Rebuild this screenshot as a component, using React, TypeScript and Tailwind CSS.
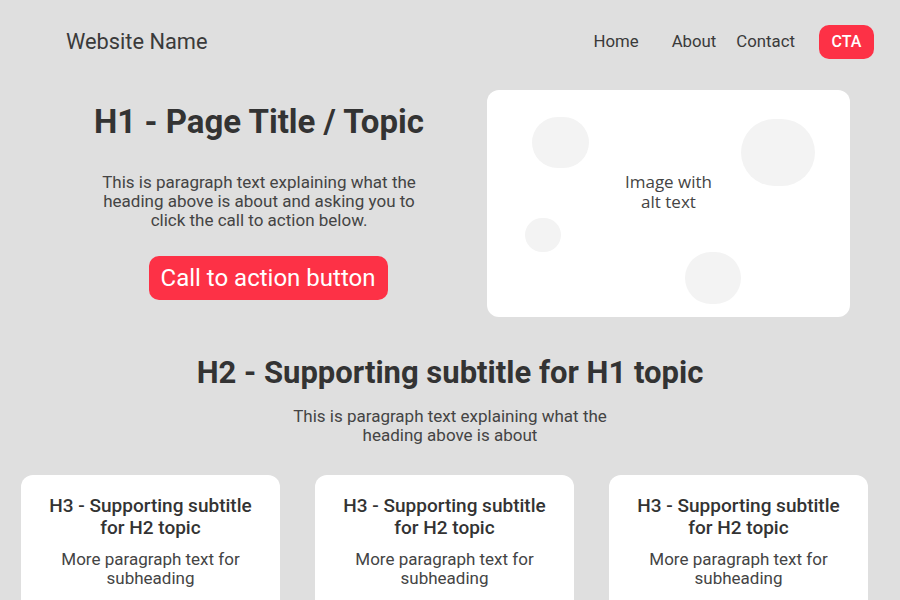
import React from "react";

const cards = [1, 2, 3];

export default function App() {
  return (
    <div className="h-[600px] w-[900px] overflow-hidden bg-[#dfdfdf] text-[#333333] font-['Roboto',sans-serif]">
      <header className="flex h-[84px] items-center justify-between pl-[66px] pr-[26px]">
        <div className="text-[21.8px] text-[#3a3a3a]">Website Name</div>
        <nav className="flex items-center text-[16.8px] text-[#3a3a3a]">
          <a className="mr-[33px]">Home</a>
          <a className="mr-[20px]">About</a>
          <a className="mr-[24px]">Contact</a>
          <button className="flex h-[34px] w-[55px] items-center justify-center rounded-[10px] bg-[#fd3146] text-[16px] font-medium text-white">
            CTA
          </button>
        </nav>
      </header>

      <section className="flex pl-[66px] pt-[6px]">
        <div className="flex w-[386px] flex-col items-center">
          <h1 className="mt-[12px] text-[33px] font-bold leading-[40px] text-[#333333]">
            H1 - Page Title / Topic
          </h1>
          <p className="mt-[31px] w-[330px] text-center text-[17px] leading-[19px] text-[#444444]">
            This is paragraph text explaining what the heading above is about and asking you to click the call to action below.
          </p>
          <button className="ml-[18px] mt-[26px] h-[44px] w-[239px] rounded-[10px] bg-[#fd3146] text-[24px] text-white">
            Call to action button
          </button>
        </div>
        <div className="relative ml-[35px] flex h-[227px] w-[363px] flex-col items-center justify-center overflow-hidden rounded-[12px] bg-white">
          <span className="absolute left-[45px] top-[27px] h-[51px] w-[57px] rounded-full bg-[#f3f3f3]" />
          <span className="absolute left-[254px] top-[29px] h-[67px] w-[74px] rounded-full bg-[#f3f3f3]" />
          <span className="absolute left-[38px] top-[128px] h-[34px] w-[36px] rounded-full bg-[#f3f3f3]" />
          <span className="absolute left-[198px] top-[162px] h-[52px] w-[56px] rounded-full bg-[#f3f3f3]" />
          <div className="relative mb-[24px] flex flex-col items-center gap-[3px] font-['Open_Sans',sans-serif] text-[17px] leading-[17px] text-[#444444]">
            <span>Image with</span>
            <span>alt text</span>
          </div>
        </div>
      </section>

      <section className="flex flex-col items-center pt-[37px]">
        <h2 className="text-[31px] font-bold leading-[38px] text-[#333333]">
          H2 - Supporting subtitle for H1 topic
        </h2>
        <p className="mt-[15px] w-[330px] text-center text-[17px] leading-[19px] text-[#444444]">
          This is paragraph text explaining what the heading above is about
        </p>
      </section>

      <section className="flex gap-[35px] pl-[21px] pt-[30px]">
        {cards.map((c) => (
          <div key={c} className="h-[160px] w-[259px] rounded-[12px] bg-white px-[16px] pt-[20px] text-center">
            <h3 className="text-[19px] font-medium leading-[22px] text-[#333333]">
              H3 - Supporting subtitle for H2 topic
            </h3>
            <p className="mt-[11px] px-[14px] text-[17px] leading-[19px] text-[#444444]">
              More paragraph text for subheading
            </p>
          </div>
        ))}
      </section>
    </div>
  );
}
